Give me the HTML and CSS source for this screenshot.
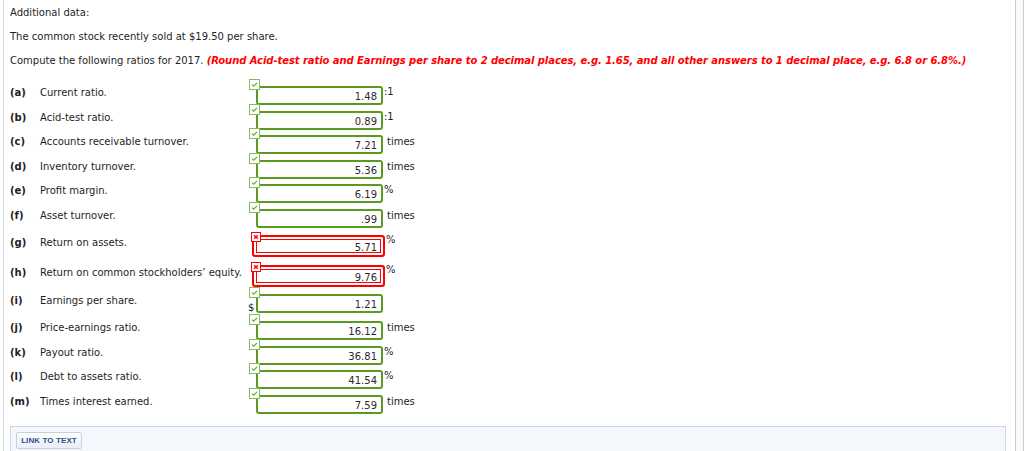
FILE: index.html
```html
<!DOCTYPE html>
<html>
<head>
<meta charset="utf-8">
<link rel="stylesheet" href="styles.css">
</head>
<body>
<div class="shell">
  <div class="page">
    <p class="intro">Additional data:</p>
    <p class="intro">The common stock recently sold at $19.50 per share.</p>
    <p class="intro">Compute the following ratios for 2017. <em class="hint">(Round Acid-test ratio and Earnings per share to 2 decimal places, e.g. 1.65, and all other answers to 1 decimal place, e.g. 6.8 or 6.8%.)</em></p>

    <div class="rows">
      <div class="row">
        <div class="label"><span class="tag">(a)</span><span class="desc">Current ratio.</span></div>
        <div class="answer">
          <div class="field"><span class="mark"><svg width="11" height="11" viewBox="0 0 11 11"><rect x="0.5" y="0.5" width="10" height="10" fill="#fff" stroke="#86bb5a"/><path d="M3 5.6 L4.7 7.1 L8 3.9" fill="none" stroke="#6aa83a" stroke-width="1.2"/></svg></span><span class="val">1.48</span></div>
          <span class="unit">:1</span>
        </div>
      </div>
      <div class="row">
        <div class="label"><span class="tag">(b)</span><span class="desc">Acid-test ratio.</span></div>
        <div class="answer">
          <div class="field"><span class="mark"><svg width="11" height="11" viewBox="0 0 11 11"><rect x="0.5" y="0.5" width="10" height="10" fill="#fff" stroke="#86bb5a"/><path d="M3 5.6 L4.7 7.1 L8 3.9" fill="none" stroke="#6aa83a" stroke-width="1.2"/></svg></span><span class="val">0.89</span></div>
          <span class="unit">:1</span>
        </div>
      </div>
      <div class="row">
        <div class="label"><span class="tag">(c)</span><span class="desc">Accounts receivable turnover.</span></div>
        <div class="answer">
          <div class="field"><span class="mark"><svg width="11" height="11" viewBox="0 0 11 11"><rect x="0.5" y="0.5" width="10" height="10" fill="#fff" stroke="#86bb5a"/><path d="M3 5.6 L4.7 7.1 L8 3.9" fill="none" stroke="#6aa83a" stroke-width="1.2"/></svg></span><span class="val">7.21</span></div>
          <span class="unit word">times</span>
        </div>
      </div>
      <div class="row">
        <div class="label"><span class="tag">(d)</span><span class="desc">Inventory turnover.</span></div>
        <div class="answer">
          <div class="field"><span class="mark"><svg width="11" height="11" viewBox="0 0 11 11"><rect x="0.5" y="0.5" width="10" height="10" fill="#fff" stroke="#86bb5a"/><path d="M3 5.6 L4.7 7.1 L8 3.9" fill="none" stroke="#6aa83a" stroke-width="1.2"/></svg></span><span class="val">5.36</span></div>
          <span class="unit word">times</span>
        </div>
      </div>
      <div class="row">
        <div class="label"><span class="tag">(e)</span><span class="desc">Profit margin.</span></div>
        <div class="answer">
          <div class="field"><span class="mark"><svg width="11" height="11" viewBox="0 0 11 11"><rect x="0.5" y="0.5" width="10" height="10" fill="#fff" stroke="#86bb5a"/><path d="M3 5.6 L4.7 7.1 L8 3.9" fill="none" stroke="#6aa83a" stroke-width="1.2"/></svg></span><span class="val">6.19</span></div>
          <span class="unit">%</span>
        </div>
      </div>
      <div class="row">
        <div class="label"><span class="tag">(f)</span><span class="desc">Asset turnover.</span></div>
        <div class="answer">
          <div class="field"><span class="mark"><svg width="11" height="11" viewBox="0 0 11 11"><rect x="0.5" y="0.5" width="10" height="10" fill="#fff" stroke="#86bb5a"/><path d="M3 5.6 L4.7 7.1 L8 3.9" fill="none" stroke="#6aa83a" stroke-width="1.2"/></svg></span><span class="val">.99</span></div>
          <span class="unit word">times</span>
        </div>
      </div>
      <div class="row wrong">
        <div class="label"><span class="tag">(g)</span><span class="desc">Return on assets.</span></div>
        <div class="answer">
          <div class="field bad"><span class="mark"><svg width="10" height="10" viewBox="0 0 10 10"><rect x="0.5" y="0.5" width="9" height="9" fill="#fff" stroke="#f00"/><path d="M3.2 3.2 L6.8 6.8 M6.8 3.2 L3.2 6.8" stroke="#f00" stroke-width="1.5"/></svg></span><span class="val">5.71</span></div>
          <span class="unit">%</span>
        </div>
      </div>
      <div class="row wrong">
        <div class="label"><span class="tag">(h)</span><span class="desc">Return on common stockholders’ equity.</span></div>
        <div class="answer">
          <div class="field bad"><span class="mark"><svg width="10" height="10" viewBox="0 0 10 10"><rect x="0.5" y="0.5" width="9" height="9" fill="#fff" stroke="#f00"/><path d="M3.2 3.2 L6.8 6.8 M6.8 3.2 L3.2 6.8" stroke="#f00" stroke-width="1.5"/></svg></span><span class="val">9.76</span></div>
          <span class="unit">%</span>
        </div>
      </div>
      <div class="row money">
        <div class="label"><span class="tag">(i)</span><span class="desc">Earnings per share.</span></div>
        <div class="answer">
          <div class="field"><span class="mark"><svg width="11" height="11" viewBox="0 0 11 11"><rect x="0.5" y="0.5" width="10" height="10" fill="#fff" stroke="#86bb5a"/><path d="M3 5.6 L4.7 7.1 L8 3.9" fill="none" stroke="#6aa83a" stroke-width="1.2"/></svg></span><span class="dollar">$</span><span class="val">1.21</span></div>
        </div>
      </div>
      <div class="row">
        <div class="label"><span class="tag">(j)</span><span class="desc">Price-earnings ratio.</span></div>
        <div class="answer">
          <div class="field"><span class="mark"><svg width="11" height="11" viewBox="0 0 11 11"><rect x="0.5" y="0.5" width="10" height="10" fill="#fff" stroke="#86bb5a"/><path d="M3 5.6 L4.7 7.1 L8 3.9" fill="none" stroke="#6aa83a" stroke-width="1.2"/></svg></span><span class="val">16.12</span></div>
          <span class="unit word">times</span>
        </div>
      </div>
      <div class="row">
        <div class="label"><span class="tag">(k)</span><span class="desc">Payout ratio.</span></div>
        <div class="answer">
          <div class="field"><span class="mark"><svg width="11" height="11" viewBox="0 0 11 11"><rect x="0.5" y="0.5" width="10" height="10" fill="#fff" stroke="#86bb5a"/><path d="M3 5.6 L4.7 7.1 L8 3.9" fill="none" stroke="#6aa83a" stroke-width="1.2"/></svg></span><span class="val">36.81</span></div>
          <span class="unit">%</span>
        </div>
      </div>
      <div class="row">
        <div class="label"><span class="tag">(l)</span><span class="desc">Debt to assets ratio.</span></div>
        <div class="answer">
          <div class="field"><span class="mark"><svg width="11" height="11" viewBox="0 0 11 11"><rect x="0.5" y="0.5" width="10" height="10" fill="#fff" stroke="#86bb5a"/><path d="M3 5.6 L4.7 7.1 L8 3.9" fill="none" stroke="#6aa83a" stroke-width="1.2"/></svg></span><span class="val">41.54</span></div>
          <span class="unit">%</span>
        </div>
      </div>
      <div class="row">
        <div class="label"><span class="tag">(m)</span><span class="desc">Times interest earned.</span></div>
        <div class="answer">
          <div class="field"><span class="mark"><svg width="11" height="11" viewBox="0 0 11 11"><rect x="0.5" y="0.5" width="10" height="10" fill="#fff" stroke="#86bb5a"/><path d="M3 5.6 L4.7 7.1 L8 3.9" fill="none" stroke="#6aa83a" stroke-width="1.2"/></svg></span><span class="val">7.59</span></div>
          <span class="unit word">times</span>
        </div>
      </div>
    </div>

    <div class="panel">
      <button class="link">LINK TO TEXT</button>
    </div>
  </div>
  <div class="rail"></div>
</div>
</body>
</html>
```

FILE: styles.css
```css
html, body {
  margin: 0;
  padding: 0;
  background: #fff;
  overflow: hidden;
}

.shell {
  display: flex;
  height: 451px;
  font-family: "DejaVu Sans", Verdana, sans-serif;
  font-size: 10px;
  color: #1e1e1e;
}

.page {
  box-sizing: border-box;
  margin-left: 3px;
  width: 1013px;
  height: 451px;
  border-left: 1px solid #d6dbe1;
  border-right: 1px solid #c9ced6;
  padding: 6px 0 0 6px;
  overflow: hidden;
}

.rail {
  box-sizing: border-box;
  width: 8px;
  height: 451px;
  background: #fafafa;
  border-right: 1px solid #c9ced6;
}

.intro {
  margin: 0 0 11px 0;
  line-height: 13px;
}

.hint {
  color: #f00;
  font-weight: bold;
  font-style: italic;
  letter-spacing: -0.07px;
}

.rows {
  margin-top: 19px;
  display: flex;
  flex-direction: column;
}

.row {
  display: flex;
  align-items: flex-start;
  height: 24.6px;
  line-height: 13px;
}

.row.wrong {
  height: 30px;
}

.row.money {
  height: 27.5px;
}

.label {
  display: flex;
  width: 246px;
  flex: none;
}

.row.wrong .label {
  padding-top: 2px;
}

.tag {
  width: 30px;
  font-weight: bold;
  flex: none;
}

.answer {
  display: flex;
  align-items: flex-start;
}

.field {
  position: relative;
  box-sizing: border-box;
  width: 127px;
  height: 19px;
  border: 2px solid #5a9a1f;
  border-radius: 3px;
  text-align: right;
  padding: 1px 4px 0 0;
  line-height: 15px;
  color: #2a2a2a;
  background: #fff;
}

.field.bad {
  width: 133px;
  height: 22px;
  margin-left: -4px;
  margin-top: 1.4px;
  border-color: #f00;
  box-shadow: inset 0 0 0 2px #fff, inset 0 0 0 3px #f00;
  padding: 3px 6px 0 0;
}

.mark {
  position: absolute;
  left: -9px;
  top: -9px;
  width: 11px;
  height: 11px;
  line-height: 0;
}

.field.bad .mark {
  left: -4px;
  top: -5px;
}

.dollar {
  position: absolute;
  left: -10px;
  bottom: -3px;
  line-height: 12px;
  color: #222;
}

.unit {
  margin-left: 1px;
  margin-top: -1px;
  line-height: 13px;
}

.unit.word {
  margin-left: 4px;
  margin-top: 0;
}

.panel {
  box-sizing: border-box;
  margin-top: 6.5px;
  width: 996px;
  height: 40px;
  border: 1px solid #cbd7e5;
  background: #f4f7fb;
  padding: 5px 0 0 5px;
}

.link {
  display: block;
  box-sizing: border-box;
  width: 66px;
  height: 17px;
  margin: 0;
  padding: 0;
  border: 1px solid #c6d0dc;
  border-radius: 2px;
  background: linear-gradient(#ffffff, #e9eef5);
  font-family: "Liberation Sans", Arial, sans-serif;
  font-size: 8px;
  font-weight: bold;
  letter-spacing: 0.1px;
  color: #2f4f8f;
  line-height: 15px;
  text-align: center;
}
```
